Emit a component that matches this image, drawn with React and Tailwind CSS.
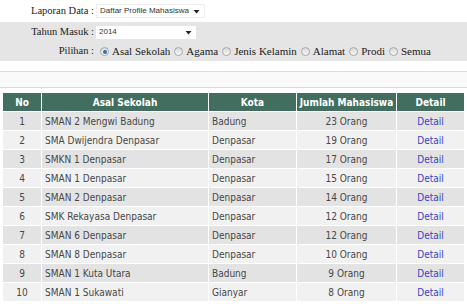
import React from "react";

const rows = [
  ["1", "SMAN 2 Mengwi Badung", "Badung", "23 Orang"],
  ["2", "SMA Dwijendra Denpasar", "Denpasar", "19 Orang"],
  ["3", "SMKN 1 Denpasar", "Denpasar", "17 Orang"],
  ["4", "SMAN 1 Denpasar", "Denpasar", "15 Orang"],
  ["5", "SMAN 2 Denpasar", "Denpasar", "14 Orang"],
  ["6", "SMK Rekayasa Denpasar", "Denpasar", "12 Orang"],
  ["7", "SMAN 6 Denpasar", "Denpasar", "12 Orang"],
  ["8", "SMAN 8 Denpasar", "Denpasar", "10 Orang"],
  ["9", "SMAN 1 Kuta Utara", "Badung", "9 Orang"],
  ["10", "SMAN 1 Sukawati", "Gianyar", "8 Orang"],
];

function Radio({ checked }) {
  return (
    <span className="relative inline-block w-[9px] h-[9px] rounded-full border border-[#a8a8a8] bg-gradient-to-b from-[#d8d8d8] to-[#f8f8f8] shrink-0">
      {checked && (
        <span className="absolute left-[1.5px] top-[1.5px] w-[4px] h-[4px] rounded-full bg-[#2f6fb5]" />
      )}
    </span>
  );
}

function Option({ label, checked }) {
  return (
    <span className="flex items-center">
      <Radio checked={checked} />
      <span className="ml-[3px] mr-[4px]">{label}</span>
    </span>
  );
}

function Arrow() {
  return (
    <svg width="7" height="5" viewBox="0 0 7 5" className="shrink-0">
      <path d="M0.5 1 L6.5 1 L3.5 4.5 Z" fill="#222" />
    </svg>
  );
}

export default function App() {
  const serif = { fontFamily: '"Liberation Serif", "Times New Roman", serif' };
  return (
    <div className="w-[467px] h-[304px] bg-white overflow-hidden text-[#222]">
      <div style={serif}>
        <div className="h-[22px] flex items-center">
          <span className="w-[94px] text-right text-[10.5px] leading-none">Laporan Data :</span>
          <div className="ml-[2px] w-[109px] h-[14px] bg-white border border-[#eeeeee] flex items-center pl-[3px] pr-[4px] justify-between" style={{ fontFamily: '"Liberation Sans", Arial, sans-serif' }}>
            <span className="text-[8px] leading-none text-[#333]">Daftar Profile Mahasiswa</span>
            <Arrow />
          </div>
        </div>
        <div className="bg-[#e5e5e5] h-[39px]">
          <div className="h-[20px] flex items-center">
            <span className="w-[94px] text-right text-[10.5px] leading-none">Tahun Masuk :</span>
            <div className="ml-[2px] w-[100px] h-[13px] bg-white flex items-center pl-[3px] pr-[4px] justify-between" style={{ fontFamily: '"Liberation Sans", Arial, sans-serif' }}>
              <span className="text-[8px] leading-none text-[#333]">2014</span>
              <Arrow />
            </div>
          </div>
          <div className="h-[19px] flex items-center text-[11px] leading-none">
            <span className="w-[94px] text-right text-[10.5px]">Pilihan :</span>
            <span className="w-[6px]" />
            <Option label="Asal Sekolah" checked />
            <Option label="Agama" />
            <Option label="Jenis Kelamin" />
            <Option label="Alamat" />
            <Option label="Prodi" />
            <Option label="Semua" />
          </div>
        </div>
      </div>
      <div className="h-[11px] bg-white border-b border-[#dcdcdc]" />
      <div className="h-[16px] bg-[#fafafa] border-b border-[#dcdcdc]" />
      <div className="h-[4px]" />
      <table
        className="ml-[2px] w-[463px] table-fixed border-separate border-spacing-[1px] text-[10px] font-stretch-condensed"
        style={{ fontFamily: '"DejaVu Sans", Verdana, sans-serif' }}
      >
        <colgroup>
          <col className="w-[38px]" />
          <col className="w-[166px]" />
          <col className="w-[87px]" />
          <col className="w-[99px]" />
          <col className="w-[67px]" />
        </colgroup>
        <thead>
          <tr className="h-[18px] bg-[#416e5f] text-white font-bold">
            <th className="p-0 text-center">No</th>
            <th className="p-0 text-center">Asal Sekolah</th>
            <th className="p-0 text-center">Kota</th>
            <th className="p-0 text-center">Jumlah Mahasiswa</th>
            <th className="p-0 text-center">Detail</th>
          </tr>
        </thead>
        <tbody className="text-[#474747]">
          {rows.map((r, i) => (
            <tr key={r[0]} className={`h-[18px] ${i % 2 === 0 ? "bg-[#e3e3e3]" : "bg-[#f1f1f1]"}`}>
              <td className="p-0 text-center">{r[0]}</td>
              <td className="p-0 pl-[3px] whitespace-nowrap">{r[1]}</td>
              <td className="p-0 pl-[3px]">{r[2]}</td>
              <td className="p-0 text-center">{r[3]}</td>
              <td className="p-0 text-center text-[#3345c4]">Detail</td>
            </tr>
          ))}
        </tbody>
      </table>
    </div>
  );
}
